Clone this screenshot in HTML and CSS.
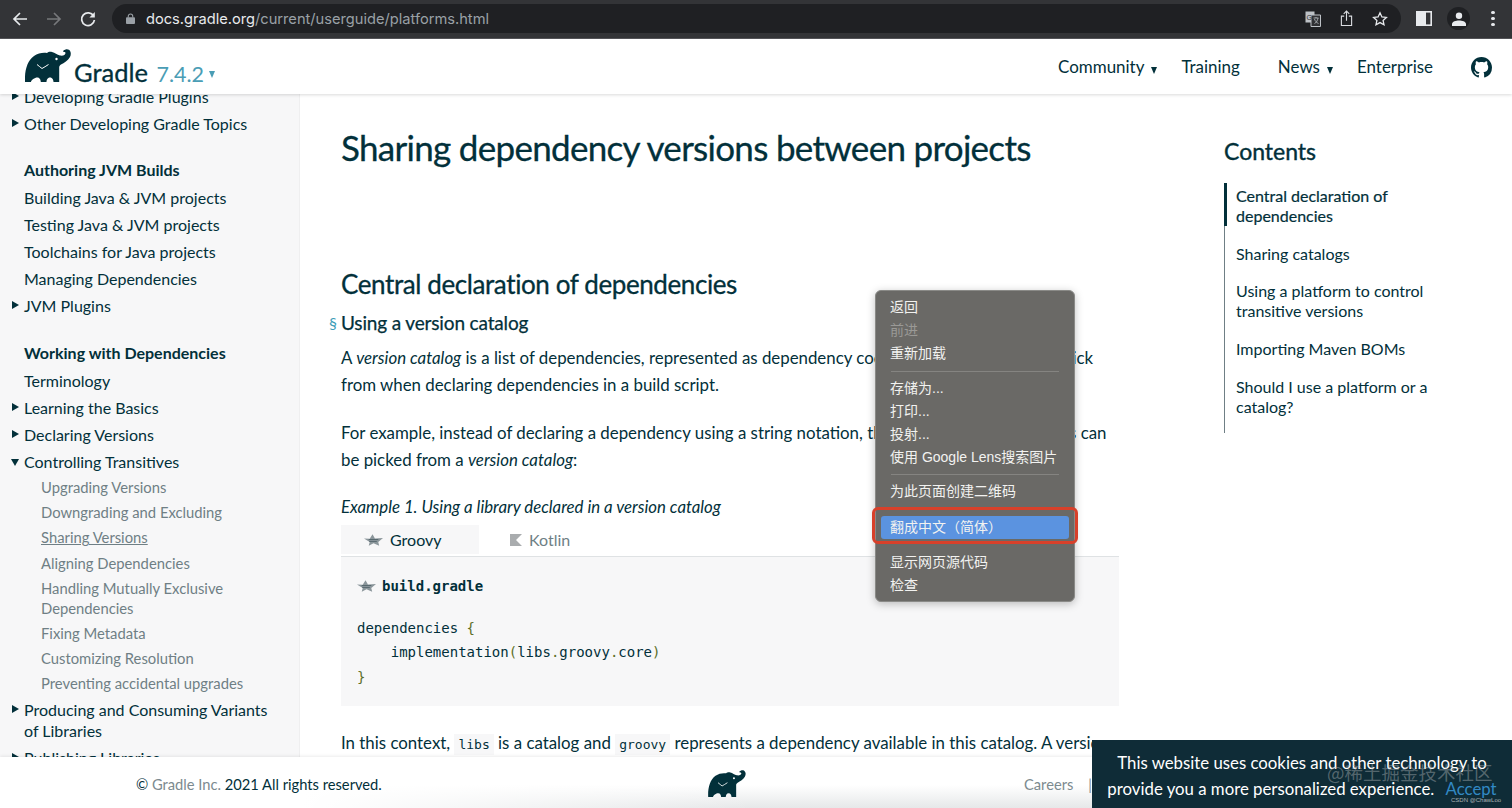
FILE: index.html
```html
<!DOCTYPE html>
<html lang="en">

<head>
    <meta charset="UTF-8">
    <meta name="viewport" content="width=device-width, initial-scale=1.0">
    <title>Sharing dependency versions between projects</title>
    <link rel="stylesheet" href="styles.css">
</head>

<body>
    <div class="toolbar">
        <svg class="tool_icon" viewBox="0 0 18 18"><path d="M16 9H3M9 3L3 9l6 6" fill="none" stroke="#e8eaed" stroke-width="1.7"/></svg>
        <svg class="tool_icon" viewBox="0 0 18 18"><path d="M2 9h13M9 3l6 6-6 6" fill="none" stroke="#77787b" stroke-width="1.7"/></svg>
        <svg class="tool_icon" viewBox="0 0 18 18"><path d="M14.6 6A6.4 6.4 0 1 0 15.4 10" fill="none" stroke="#e8eaed" stroke-width="1.8"/><path d="M15.8 2v5.4h-5.4z" fill="#e8eaed"/></svg>
        <div class="url_bar">
            <svg class="lock" viewBox="0 0 10 12"><path d="M2.5 5V3.5a2.5 2.5 0 0 1 5 0V5" fill="none" stroke="#9aa0a6" stroke-width="1.2"/><rect y="4.6" width="10" height="7.4" rx="1" fill="#9aa0a6"/></svg>
            <span class="url"><span class="url_host">docs.gradle.org</span>/current/userguide/platforms.html</span>
            <div class="url_icons">
                <svg class="translate_icon" viewBox="0 0 16 16"><rect x="0.5" y="0.5" width="9" height="11" fill="#bdc1c6"/><path d="M6 4h9.5v11.500H6z" fill="#303134" stroke="#bdc1c6"/><text x="1.500" y="8.500" class="translate_text">G</text><path d="M8.500 7h5M11 6v1M9.500 12.500c2-1 3-3 3.500-5.500M9.500 8c.5 2 2 3.500 4 4.500" fill="none" stroke="#bdc1c6" stroke-width=".8"/></svg>
                <svg class="share_icon" viewBox="0 0 14 18"><path d="M4.500 6.500H1.500v10h11v-10H9.500" fill="none" stroke="#dadce0" stroke-width="1.200"/><path d="M7 11.500V1.500M4 4l3-3 3 3" fill="none" stroke="#dadce0" stroke-width="1.200"/></svg>
                <svg class="star_icon" viewBox="0 0 16 16"><path d="M8 1.800l1.900 4.100 4.500.5-3.300 3 .9 4.400L8 11.600l-4 2.200.9-4.400-3.300-3 4.500-.5z" fill="none" stroke="#e8eaed" stroke-width="1.300"/></svg>
            </div>
        </div>
        <svg class="panel_icon" viewBox="0 0 16 15"><rect x="0.800" y="0.800" width="14.400" height="13.400" fill="none" stroke="#e8eaed" stroke-width="1.600"/><rect x="1" y="1" width="9" height="13" fill="#e8eaed"/></svg>
        <div class="avatar"><svg viewBox="0 0 14 14"><circle cx="7" cy="3.700" r="3.200" fill="#e8eaed"/><path d="M0 14v-2c0-2.500 4-3.500 7-3.500s7 1 7 3.500v2z" fill="#e8eaed"/></svg></div>
        <div class="dots"><i></i><i></i><i></i></div>
    </div>

    <header class="site_header">
        <a class="brand">
            <svg class="logo" viewBox="0 0 46 33"><path d="M0 33C-.5 22 2 12 9 7c4-3 9-3.500 13-3 1-1 3-1.500 5-1 3 .5 5 3 8 3.500 3 .5 5.500-.5 5.500-2.500 0-1-1-1.200-1.500-1-.7.300-1.200-.8-.5-1.500C40 .5 42-.5 44 .8c2 1.500 2.300 4.500 1 7.200-2 3.700-6 6-9 7.500-1 .5-1.800 1.500-1.800 3V33h-5.700c0-2-1-4.500-3.500-4.500S21.500 31 21.500 33h-5.700c0-2-1-4.500-3.500-4.500S6 31 6 33z" fill="#02303a"/><path d="M12 15.500c2 1.500 3.500 3 5 4 2-1 4-2.500 6.500-4" fill="none" stroke="#fff" stroke-width="1"/><circle cx="31.500" cy="10" r="1.200" fill="#fff"/></svg>
            <span class="brand_name">Gradle</span>
            <span class="brand_version">7.4.2</span>
            <span class="brand_caret"></span>
        </a>
        <nav class="top_nav">
            <a class="nav_community">Community<span class="caret"></span></a>
            <a class="nav_training">Training</a>
            <a class="nav_news">News<span class="caret"></span></a>
            <a class="nav_enterprise">Enterprise</a>
            <svg class="github" viewBox="0 0 16 16"><path fill="#02303a" d="M8 0C3.580 0 0 3.580 0 8c0 3.540 2.290 6.530 5.470 7.590.4.070.55-.17.55-.38 0-.19-.01-.82-.01-1.490-2.010.37-2.530-.49-2.690-.94-.09-.23-.48-.94-.82-1.130-.28-.15-.68-.52-.01-.53.63-.01 1.080.58 1.230.82.720 1.210 1.870.87 2.330.66.070-.52.280-.87.510-1.070-1.780-.2-3.640-.89-3.640-3.950 0-.87.310-1.590.820-2.150-.08-.2-.36-1.020.08-2.120 0 0 .67-.21 2.200.82.640-.18 1.320-.27 2-.27s1.360.09 2 .27c1.530-1.040 2.200-.82 2.200-.82.440 1.100.16 1.920.08 2.120.51.560.82 1.270.82 2.150 0 3.070-1.870 3.750-3.650 3.950.29.250.54.730.54 1.480 0 1.070-.01 1.930-.01 2.200 0 .21.150.46.55.38A8.010 8.010 0 0 0 16 8c0-4.420-3.580-8-8-8z"/></svg>
        </nav>
    </header>

    <div class="page_body">
        <aside class="sidebar">
            <ul class="side_list">
                <li class="side_item has_arrow">Developing Gradle Plugins</li>
                <li class="side_item has_arrow">Other Developing Gradle Topics</li>
                <li class="side_title">Authoring JVM Builds</li>
                <li class="side_item">Building Java &amp; JVM projects</li>
                <li class="side_item">Testing Java &amp; JVM projects</li>
                <li class="side_item">Toolchains for Java projects</li>
                <li class="side_item">Managing Dependencies</li>
                <li class="side_item has_arrow">JVM Plugins</li>
                <li class="side_title">Working with Dependencies</li>
                <li class="side_item">Terminology</li>
                <li class="side_item has_arrow">Learning the Basics</li>
                <li class="side_item has_arrow">Declaring Versions</li>
                <li class="side_item has_arrow open">Controlling Transitives</li>
                <li class="side_sub">Upgrading Versions</li>
                <li class="side_sub">Downgrading and Excluding</li>
                <li class="side_sub current">Sharing Versions</li>
                <li class="side_sub">Aligning Dependencies</li>
                <li class="side_sub">Handling Mutually Exclusive Dependencies</li>
                <li class="side_sub">Fixing Metadata</li>
                <li class="side_sub">Customizing Resolution</li>
                <li class="side_sub">Preventing accidental upgrades</li>
                <li class="side_item has_arrow wrap">Producing and Consuming Variants of Libraries</li>
                <li class="side_item has_arrow">Publishing Libraries</li>
            </ul>
        </aside>

        <main class="content">
            <h1 class="page_title">Sharing dependency versions between projects</h1>
            <h2 class="section_title">Central declaration of dependencies</h2>
            <h3 class="sub_title"><span class="anchor">§</span>Using a version catalog</h3>
            <p class="para">A <em>version catalog</em> is a list of dependencies, represented as dependency coordinates, that a user can pick<br>from when declaring dependencies in a build script.</p>
            <p class="para">For example, instead of declaring a dependency using a string notation, the dependency coordinates can<br>be picked from a <em>version catalog</em>:</p>
            <p class="example_title">Example 1. Using a library declared in a version catalog</p>
            <div class="tabs">
                <div class="tab active">
                    <svg class="groovy_icon" viewBox="0 0 20 12"><path d="M0 4.500l6 .2L9 0l2.500 4.500 8.500-.5-5 4 1 4-6-2.500-5 2.500 1-4z" fill="#8b969b"/><path d="M5 5.500h10M5.500 7.500h8" fill="none" stroke="#55666d" stroke-width="1"/></svg>
                    Groovy
                </div>
                <div class="tab">
                    <svg class="kotlin_icon" viewBox="0 0 12 12"><path d="M0 0h12L6 6l6 6H0z" fill="#a9acae"/></svg>
                    Kotlin
                </div>
            </div>
            <div class="code_block">
                <div class="code_name">
                    <svg class="groovy_icon" viewBox="0 0 20 12"><path d="M0 4.500l6 .2L9 0l2.500 4.500 8.500-.5-5 4 1 4-6-2.500-5 2.500 1-4z" fill="#8b969b"/><path d="M5 5.500h10M5.500 7.500h8" fill="none" stroke="#55666d" stroke-width="1"/></svg>
                    build.gradle
                </div>
                <pre class="code">dependencies <span class="punct">{</span>
    implementation<span class="punct">(</span>libs<span class="punct">.</span>groovy<span class="punct">.</span>core<span class="punct">)</span>
<span class="punct">}</span></pre>
            </div>
            <p class="para last_para">In this context, <code>libs</code> is a catalog and <code>groovy</code> represents a dependency available in this catalog. A version catalog</p>
        </main>

        <aside class="toc">
            <h2 class="toc_title">Contents</h2>
            <ul class="toc_list">
                <li class="toc_item active">Central declaration of dependencies</li>
                <li class="toc_item">Sharing catalogs</li>
                <li class="toc_item">Using a platform to control transitive versions</li>
                <li class="toc_item">Importing Maven BOMs</li>
                <li class="toc_item">Should I use a platform or a catalog?</li>
            </ul>
        </aside>
    </div>

    <footer class="site_footer">
        <div class="copyright">© <span class="muted">Gradle Inc.</span> 2021 All rights reserved.</div>
        <svg class="footer_logo" viewBox="0 0 46 33"><path d="M0 33C-.5 22 2 12 9 7c4-3 9-3.500 13-3 1-1 3-1.500 5-1 3 .5 5 3 8 3.500 3 .5 5.500-.5 5.500-2.500 0-1-1-1.200-1.500-1-.7.300-1.200-.8-.5-1.500C40 .5 42-.5 44 .8c2 1.500 2.300 4.500 1 7.200-2 3.700-6 6-9 7.500-1 .5-1.800 1.500-1.800 3V33h-5.700c0-2-1-4.500-3.500-4.500S21.500 31 21.500 33h-5.700c0-2-1-4.500-3.500-4.500S6 31 6 33z" fill="#02303a"/><path d="M12 15.500c2 1.500 3.500 3 5 4 2-1 4-2.500 6.500-4" fill="none" stroke="#fff" stroke-width="1"/><circle cx="31.500" cy="10" r="1.200" fill="#fff"/></svg>
        <div class="footer_links">Careers<span class="footer_sep">|</span></div>
    </footer>

    <div class="context_menu">
        <div class="menu_item">返回</div>
        <div class="menu_item disabled">前进</div>
        <div class="menu_item">重新加载</div>
        <div class="menu_sep"></div>
        <div class="menu_item">存储为...</div>
        <div class="menu_item">打印...</div>
        <div class="menu_item">投射...</div>
        <div class="menu_item">使用 Google Lens搜索图片</div>
        <div class="menu_sep"></div>
        <div class="menu_item">为此页面创建二维码</div>
        <div class="menu_sep blank"></div>
        <div class="menu_item selected">翻成中文（简体）</div>
        <div class="menu_sep blank"></div>
        <div class="menu_item">显示网页源代码</div>
        <div class="menu_item">检查</div>
    </div>
    <div class="red_box"></div>

    <div class="cookie">
        This website uses cookies and other technology to provide you a more personalized experience. <a class="accept">Accept</a>
    </div>
    <div class="watermark">@稀土掘金技术社区</div>
    <div class="watermark_small">CSDN @ChawLoo</div>
</body>

</html>
```
FILE: styles.css
```css
* {
    margin: 0;
    padding: 0;
    box-sizing: border-box;
}

html,
body {
    width: 1512px;
    height: 808px;
    overflow: hidden;
}

body {
    position: relative;
    display: flex;
    flex-direction: column;
    background-color: #fff;
    color: #02303a;
    font-family: Lato, "Noto Sans CJK SC", sans-serif;
}

ul {
    list-style: none;
}

/* browser bar */
.toolbar {
    flex: none;
    display: flex;
    align-items: center;
    height: 39px;
    padding: 0 10px 1px 11px;
    background-color: #333437;
    border-bottom: 1px solid #55565a;
}

.tool_icon {
    width: 18px;
    height: 18px;
    margin-right: 16px;
}

.url_bar {
    flex: none;
    display: flex;
    align-items: center;
    width: 1289px;
    height: 29px;
    margin-left: -1px;
    padding: 0 13px 0 14px;
    border-radius: 15px;
    background-color: #1f2023;
}

.lock {
    width: 9px;
    height: 11px;
    margin-right: 11px;
}

.url {
    font-family: Inter, sans-serif;
    font-size: 14.650px;
    color: #9aa0a6;
}

.url_host {
    color: #e8eaed;
}

.url_icons {
    display: flex;
    align-items: center;
    margin-left: auto;
}

.translate_icon {
    width: 16px;
    height: 16px;
}

.translate_text {
    font-family: "Liberation Sans", sans-serif;
    font-size: 7px;
    fill: #303134;
}

.share_icon {
    width: 13px;
    height: 17px;
    margin-left: 19px;
}

.star_icon {
    width: 16px;
    height: 16px;
    margin-left: 19px;
}

.panel_icon {
    width: 16px;
    height: 15px;
    margin-left: 15px;
}

.avatar {
    display: flex;
    align-items: center;
    justify-content: center;
    width: 23px;
    height: 23px;
    margin-left: 15px;
    border-radius: 50%;
    background-color: #1f2023;
}

.avatar svg {
    width: 14px;
    height: 14px;
}

.dots {
    display: flex;
    flex-direction: column;
    gap: 2.500px;
    margin-left: 21px;
}

.dots i {
    display: block;
    width: 4px;
    height: 3.500px;
    border-radius: 50%;
    background-color: #e8eaed;
}

/* site header */
.site_header {
    position: relative;
    z-index: 2;
    flex: none;
    display: flex;
    align-items: flex-start;
    justify-content: space-between;
    height: 55px;
    padding: 10px 20px 0 25px;
    background-color: #fff;
    box-shadow: 0 1px 3px rgba(0, 0, 0, 0.15);
}

.brand {
    display: flex;
    align-items: baseline;
}

.logo {
    align-self: flex-start;
    width: 46px;
    height: 33px;
}

.brand_name {
    margin: 7px 0 0 3px;
    font-size: 25.500px;
    line-height: 32px;
    -webkit-text-stroke: 0.3px #02303a;
}

.brand_version {
    margin-left: 8.500px;
    font-size: 21.500px;
    color: #4a9db5;
}

.brand_caret {
    align-self: center;
    margin: 11px 0 0 5px;
    border-top: 7px solid #4a9db5;
    border-left: 3.500px solid transparent;
    border-right: 3.500px solid transparent;
}

.top_nav {
    display: flex;
    align-items: center;
    height: 36px;
    font-size: 16.950px;
    line-height: 36px;
}

.caret {
    display: inline-block;
    margin-left: 7px;
    vertical-align: -1px;
    border-top: 7px solid #02303a;
    border-left: 3.500px solid transparent;
    border-right: 3.500px solid transparent;
}

.nav_community {
    margin-right: 24px;
}

.nav_training {
    margin-right: 38px;
}

.nav_news {
    margin-right: 24px;
}

.nav_enterprise {
    margin-right: 38px;
}

.github {
    width: 21px;
    height: 21px;
}

/* middle part */
.page_body {
    flex: 1;
    min-height: 0;
    display: flex;
    overflow: hidden;
}

.sidebar {
    flex: none;
    width: 300px;
    padding-left: 24px;
    overflow: hidden;
    background-color: #f7f7f8;
    border-right: 1px solid #efeff0;
}

.side_list {
    margin-top: -11.500px;
    font-size: 16px;
}

.side_item {
    position: relative;
    line-height: 27px;
    width: 250px;
}

.side_item.wrap {
    padding-top: 3px;
    padding-bottom: 3px;
    line-height: 21px;
}

.has_arrow::before {
    content: "";
    position: absolute;
    top: 9px;
    left: -12px;
    border-left: 7px solid #02303a;
    border-top: 4px solid transparent;
    border-bottom: 4px solid transparent;
}

.open::before {
    top: 11px;
    left: -13px;
    border-top: 7px solid #02303a;
    border-left: 4.500px solid transparent;
    border-right: 4.500px solid transparent;
    border-bottom: 0;
}

.side_title {
    margin-top: 19.500px;
    font-weight: 700;
    line-height: 28px;
}

.side_sub {
    width: 240px;
    padding: 2.600px 0 2.600px 17px;
    font-size: 14.800px;
    line-height: 20px;
    color: #6f7f85;
}

.side_sub.current {
    text-decoration: underline;
}

.content {
    flex: none;
    width: 799px;
    margin-left: 20px;
    padding-left: 21px;
    overflow: hidden;
}

.page_title {
    margin-top: 31px;
    font-size: 35px;
    font-weight: 400;
    line-height: 44px;
    letter-spacing: -0.7px;
    -webkit-text-stroke: 0.3px #02303a;
}

.section_title {
    margin-top: 97px;
    font-size: 26px;
    font-weight: 400;
    line-height: 36px;
    letter-spacing: -0.4px;
    -webkit-text-stroke: 0.3px #02303a;
}

.sub_title {
    position: relative;
    margin-top: 7px;
    font-size: 19px;
    font-weight: 400;
    line-height: 28px;
    letter-spacing: -0.15px;
    -webkit-text-stroke: 0.25px #02303a;
}

.anchor {
    position: absolute;
    left: -12px;
    font-size: 16px;
    -webkit-text-stroke: 0;
    color: #3f9db8;
}

.para {
    margin-top: 7px;
    font-size: 16.850px;
    line-height: 27px;
}

.para + .para {
    margin-top: 21px;
}

.example_title {
    margin-top: 20px;
    font-size: 16.800px;
    font-style: italic;
    line-height: 28px;
}

.tabs {
    display: flex;
    height: 32px;
    margin-top: 4px;
    padding-bottom: 2px;
    font-size: 16px;
    line-height: 30px;
    border-bottom: 1px solid #dfe2e4;
}

.tab {
    display: flex;
    align-items: center;
    gap: 7px;
    width: 138px;
    padding-left: 23px;
    color: #6f7f85;
}

.tab.active {
    background-color: #f7f7f8;
    color: #02303a;
}

.groovy_icon {
    width: 19px;
    height: 12px;
}

.kotlin_icon {
    width: 12px;
    height: 12px;
    margin-left: 8px;
}

.code_block {
    height: 149px;
    padding: 19px 16px 0;
    background-color: #f7f7f8;
}

.code_name {
    display: flex;
    align-items: center;
    gap: 6px;
    font-family: "DejaVu Sans Mono", monospace;
    font-size: 14px;
    font-weight: 700;
    line-height: 20px;
}

.code {
    margin-top: 20px;
    font-family: "DejaVu Sans Mono", monospace;
    font-size: 14px;
    line-height: 24.300px;
    color: #02303a;
}

.punct {
    color: #5d6f28;
}

.para.last_para {
    margin-top: 23px;
    white-space: nowrap;
}

code {
    padding: 3px 4px;
    font-family: "DejaVu Sans Mono", monospace;
    font-size: 13px;
    background-color: #f7f7f8;
}

.toc {
    flex: none;
    width: 270px;
    margin-left: 105px;
    padding-top: 41px;
}

.toc_title {
    font-size: 23px;
    font-weight: 400;
    line-height: 32px;
    -webkit-text-stroke: 0.4px #02303a;
}

.toc_list {
    margin-top: 16px;
    padding-bottom: 16px;
    border-left: 1px solid #6f7f85;
}

.toc_item {
    width: 210px;
    margin: 0 0 17.700px -1px;
    padding-left: 9px;
    font-size: 16px;
    line-height: 20px;
    border-left: 3px solid transparent;
}

.toc_item:last-child {
    margin-bottom: 0;
}

.toc_item.active {
    padding-top: 3px;
    border-left-color: #02303a;
    -webkit-text-stroke: 0.2px #02303a;
}

/* footer */
.site_footer {
    position: relative;
    z-index: 2;
    flex: none;
    display: flex;
    align-items: center;
    height: 51px;
    padding-left: 136px;
    background: linear-gradient(90deg, #fff 20%, rgba(255, 255, 255, 0) 50%), linear-gradient(180deg, #fff 55%, #e6e8e9 100%);
    box-shadow: 0 -1px 3px rgba(0, 0, 0, 0.08);
    font-size: 14.700px;
}

.copyright {
    width: 572px;
    padding-top: 3px;
}

.muted {
    color: #7c8a8f;
}

.footer_logo {
    width: 38px;
    height: 27px;
    margin-top: 2px;
}

.footer_links {
    margin-left: 278px;
    padding-top: 3px;
    color: #7c8a8f;
}

.footer_sep {
    margin-left: 15px;
}

/* browser context menu */
.context_menu {
    position: absolute;
    z-index: 5;
    top: 290px;
    left: 875px;
    width: 200px;
    height: 312px;
    padding: 5px 5px 4px;
    border-radius: 6px;
    border: 1px solid #8a8a87;
    background-color: #6a6966;
    box-shadow: 0 2px 8px rgba(0, 0, 0, 0.25);
    font-family: "Liberation Sans", "Noto Sans CJK SC", sans-serif;
    font-size: 14px;
    color: #f2f2f0;
}

.menu_item {
    height: 23.200px;
    padding-left: 9px;
    border-radius: 3px;
    line-height: 23px;
    white-space: nowrap;
}

.menu_item.disabled {
    color: #9a9996;
}

.menu_item.selected {
    background-color: #5b93e0;
}

.menu_sep {
    height: 1px;
    margin: 5px 10px;
    background-color: #858481;
}

.menu_sep.blank {
    margin: 5.500px 10px;
    background-color: transparent;
}

.red_box {
    position: absolute;
    z-index: 6;
    top: 507px;
    left: 872px;
    width: 206px;
    height: 37px;
    border: 3px solid #d8402a;
    border-radius: 6px;
}

/* cookie notice */
.cookie {
    position: absolute;
    z-index: 4;
    right: 0;
    bottom: 0;
    width: 420px;
    height: 68px;
    padding: 10px 10px 0;
    background-color: #0f2c37;
    color: #fff;
    font-size: 16.800px;
    line-height: 25.500px;
    text-align: center;
}

.accept {
    margin-left: 7px;
    color: #3289c4;
}

.watermark {
    position: absolute;
    z-index: 7;
    top: 760px;
    left: 1327px;
    font-family: "Noto Sans CJK SC", sans-serif;
    font-size: 18.500px;
    line-height: 24px;
    color: rgba(170, 175, 178, 0.45);
}

.watermark_small {
    position: absolute;
    z-index: 7;
    top: 795px;
    left: 1451px;
    font-family: "Liberation Sans", sans-serif;
    font-size: 6px;
    line-height: 10px;
    color: #a9b0b4;
}
```
